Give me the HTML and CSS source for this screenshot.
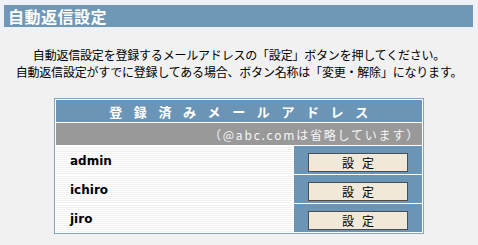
FILE: index.html
```html
<!DOCTYPE html>
<html lang="ja">
<head>
<meta charset="utf-8">
<title>自動返信設定</title>
<link rel="stylesheet" href="styles.css">
</head>
<body>
<div class="top">
  <h1 class="title">自動返信設定</h1>
</div>
<main class="content">
  <p class="desc">自動返信設定を登録するメールアドレスの「設定」ボタンを押してください。<br>自動返信設定がすでに登録してある場合、ボタン名称は「変更・解除」になります。</p>
  <table class="list">
    <thead>
      <tr><th class="head" colspan="2">登録済みメールアドレス</th></tr>
      <tr><th class="note" colspan="2">（@abc.comは省略しています）</th></tr>
    </thead>
    <tbody>
      <tr><td class="name">admin</td><td class="act"><button class="btn" type="button">設定</button></td></tr>
      <tr><td class="name">ichiro</td><td class="act"><button class="btn" type="button">設定</button></td></tr>
      <tr><td class="name">jiro</td><td class="act"><button class="btn" type="button">設定</button></td></tr>
    </tbody>
  </table>
</main>
</body>
</html>
```
FILE: styles.css
```css
html, body {
  margin: 0;
  padding: 0;
}
body {
  background: #f1f1f1;
  font-family: "Noto Sans CJK JP", "DejaVu Sans", sans-serif;
  color: #000;
  width: 478px;
  height: 245px;
  overflow: hidden;
}
.top {
  background: #eef2f7;
  padding: 5px 5px 5px 4px;
}
.title {
  margin: 0;
  height: 22px;
  line-height: 22px;
  background: #6f97b6;
  color: #fff;
  font-size: 16px;
  font-weight: bold;
  padding-left: 4px;
  letter-spacing: 0.5px;
}
.content {
  display: flex;
  flex-direction: column;
  align-items: center;
}
.desc {
  margin: 14px 0 0 0;
  font-size: 12px;
  line-height: 17px;
  text-align: center;
  letter-spacing: -0.2px;
}
.list {
  margin-top: 18px;
  width: 370px;
  border: 1px solid #87a4bf;
  border-spacing: 1px;
  background: #fff;
}
.list th, .list td {
  padding: 0;
}
.head {
  height: 22px;
  background: #6b95b7;
  color: #fff;
  font-size: 13px;
  font-weight: bold;
  letter-spacing: 11.6px;
  text-indent: 11px;
  text-align: center;
}
.note {
  height: 22px;
  background: #999;
  color: #f6f6f6;
  font-size: 12px;
  font-weight: normal;
  letter-spacing: 1.8px;
  text-align: right;
  padding-right: 2px !important;
}
.name {
  width: 223px;
  height: 26px;
  padding-left: 14px !important;
  padding-top: 2px !important;
  font-family: "DejaVu Sans", sans-serif;
  font-size: 12px;
  font-weight: bold;
  background: repeating-linear-gradient(to bottom, #ffffff 0 1px, #f1f1f1 1px 2px);
}
.act {
  width: 128px;
  background: #6b95b7;
  text-align: center;
}
.btn {
  display: inline-block;
  width: 100px;
  height: 19px;
  margin: 0;
  padding: 0;
  background: #f0e9da;
  border: 1px solid #4d4d4d;
  font-family: "Noto Sans CJK JP", sans-serif;
  font-size: 12px;
  line-height: 16px;
  letter-spacing: 8px;
  text-indent: 8px;
  color: #000;
  vertical-align: middle;
}
```
